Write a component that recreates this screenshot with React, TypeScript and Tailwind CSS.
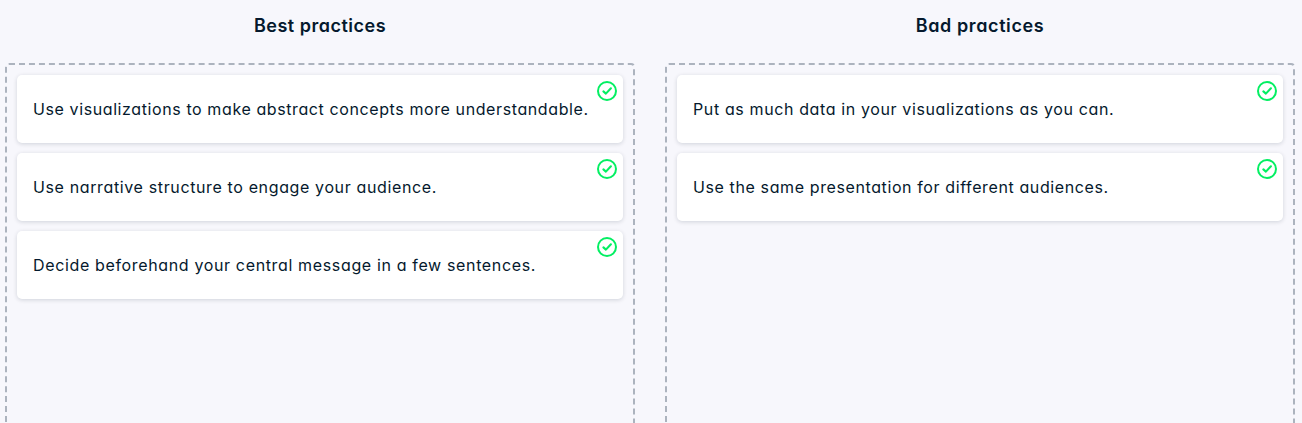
type Practice = { text: string; spacing: string };
type Column = { title: string; titleClass: string; items: Practice[] };

const columns: Column[] = [
  {
    title: 'Best practices',
    titleClass: 'tracking-[0.5px]',
    items: [
      { text: 'Use visualizations to make abstract concepts more understandable.', spacing: 'tracking-[0.6px]' },
      { text: 'Use narrative structure to engage your audience.', spacing: 'tracking-[0.63px]' },
      { text: 'Decide beforehand your central message in a few sentences.', spacing: 'tracking-[0.645px]' },
    ],
  },
  {
    title: 'Bad practices',
    titleClass: 'tracking-[0.6px]',
    items: [
      { text: 'Put as much data in your visualizations as you can.', spacing: 'tracking-[0.62px]' },
      { text: 'Use the same presentation for different audiences.', spacing: 'tracking-[0.61px]' },
    ],
  },
];

function CheckBadge() {
  return (
    <svg className="absolute right-1.5 top-1.5 size-5" viewBox="0 0 20 20" fill="none" stroke="#03ef62" strokeWidth="2">
      <circle cx="10" cy="10" r="9" />
      <path d="M6.4 10.4 L8.9 12.6 L13.9 7.3" strokeWidth="2.1" strokeLinecap="round" strokeLinejoin="round" />
    </svg>
  );
}

function Card({ text, spacing }: Practice) {
  return (
    <li className="relative flex h-[68px] items-center rounded-[5px] bg-white px-4 shadow-[0_1px_4px_rgba(5,25,45,0.16)]">
      <span className={`whitespace-nowrap text-base ${spacing}`}>{text}</span>
      <CheckBadge />
    </li>
  );
}

export default function App() {
  return (
    <main className="grid h-[423px] grid-cols-[630px_630px] gap-[30px] overflow-hidden bg-[#f7f7fc] px-[5px] font-['Inter',sans-serif] text-[#05192d] [font-feature-settings:'cv11']">
      {columns.map((column) => (
        <section key={column.title} className="flex flex-col">
          <h2 className={`flex h-[63px] shrink-0 justify-center pt-3 text-lg leading-[27px] font-semibold ${column.titleClass}`}>
            {column.title}
          </h2>
          <ul className="flex h-[400px] shrink-0 flex-col gap-2.5 rounded border-2 border-dashed border-[#acb3be] p-2.5">
            {column.items.map((item) => (
              <Card key={item.text} {...item} />
            ))}
          </ul>
        </section>
      ))}
    </main>
  );
}
